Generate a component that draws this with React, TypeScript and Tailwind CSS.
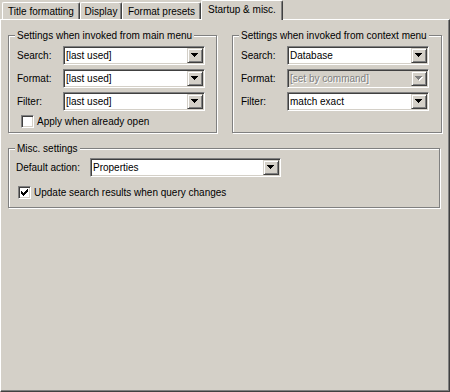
import React from "react";

function Arrow({ disabled = false }: { disabled?: boolean }) {
    const fill = disabled ? "#808080" : "#000000";
    return (
        <svg width="8" height="5" viewBox="0 0 8 5" shapeRendering="crispEdges">
            {disabled && (
                <g fill="#ffffff">
                    <rect x="1" y="1" width="7" height="1" />
                    <rect x="2" y="2" width="5" height="1" />
                    <rect x="3" y="3" width="3" height="1" />
                    <rect x="4" y="4" width="1" height="1" />
                </g>
            )}
            <g fill={fill}>
                <rect x="0" y="0" width="7" height="1" />
                <rect x="1" y="1" width="5" height="1" />
                <rect x="2" y="2" width="3" height="1" />
                <rect x="3" y="3" width="1" height="1" />
            </g>
        </svg>
    );
}

function Combo({ value, className, disabled = false }: { value: string; className: string; disabled?: boolean }) {
    return (
        <div
            className={`h-[19px] flex border border-t-[#808080] border-l-[#808080] border-r-white border-b-white shadow-[inset_1px_1px_0_#404040,inset_-1px_-1px_0_#d4d0c8] p-[1px] ${className}`}
        >
            <div
                className={`flex-1 flex items-center pl-[1px] leading-[13px] whitespace-nowrap overflow-hidden ${
                    disabled ? "bg-[#d4d0c8] text-[#808080] [text-shadow:1px_1px_0_#ffffff]" : "bg-white"
                }`}
            >
                {value}
            </div>
            <div className="w-[16px] flex items-center justify-center bg-[#d4d0c8] border border-t-[#d4d0c8] border-l-[#d4d0c8] border-r-[#404040] border-b-[#404040] shadow-[inset_1px_1px_0_#ffffff,inset_-1px_-1px_0_#808080]">
                <Arrow disabled={disabled} />
            </div>
        </div>
    );
}

function CheckBox({ checked = false }: { checked?: boolean }) {
    return (
        <div className="w-[13px] h-[13px] shrink-0 border border-t-[#808080] border-l-[#808080] border-r-white border-b-white shadow-[inset_1px_1px_0_#404040,inset_-1px_-1px_0_#d4d0c8] bg-white flex items-center justify-center">
            {checked && (
                <svg width="7" height="7" viewBox="0 0 7 7" shapeRendering="crispEdges" fill="#000">
                    <rect x="6" y="0" width="1" height="3" />
                    <rect x="5" y="1" width="1" height="3" />
                    <rect x="4" y="2" width="1" height="3" />
                    <rect x="3" y="3" width="1" height="3" />
                    <rect x="2" y="4" width="1" height="3" />
                    <rect x="1" y="3" width="1" height="3" />
                    <rect x="0" y="2" width="1" height="3" />
                </svg>
            )}
        </div>
    );
}

function Group({ title, className, children }: { title: string; className: string; children: React.ReactNode }) {
    return (
        <fieldset
            className={`border border-[#808080] shadow-[inset_1px_1px_0_#ffffff,1px_1px_0_#ffffff] pl-[6px] ${className}`}
        >
            <legend className="px-[2px] leading-[13px] bg-[#d4d0c8]">{title}</legend>
            {children}
        </fieldset>
    );
}

const tabs = [
    { label: "Title formatting", w: "w-[78px] ml-[2px]" },
    { label: "Display", w: "w-[42px]" },
    { label: "Format presets", w: "w-[79px]" },
];

export default function App() {
    return (
        <div className="w-[450px] h-[392px] bg-[#d4d0c8] text-black text-[10px] font-['Tahoma','Liberation_Sans',Arial,sans-serif] overflow-hidden select-none">
            {/* tab strip */}
            <div className="flex h-[19px] items-end">
                {tabs.map((t) => (
                    <div
                        key={t.label}
                        className={`${t.w} h-[17px] border-l border-t border-white border-r border-r-[#404040] rounded-t-[2px] shadow-[inset_-1px_0_0_#808080] flex justify-center pt-[2px] leading-[13px] whitespace-nowrap`}
                    >
                        {t.label}
                    </div>
                ))}
                <div className="relative z-10 self-start w-[82px] h-[20px] bg-[#d4d0c8] border-l border-t border-white border-r border-r-[#404040] rounded-t-[2px] shadow-[inset_-1px_0_0_#808080] flex justify-center pt-[2px] leading-[13px] whitespace-nowrap">
                    Startup &amp; misc.
                </div>
            </div>

            {/* tab page */}
            <div className="h-[373px] border border-t-white border-l-white border-r-[#404040] border-b-[#404040] shadow-[inset_-1px_-1px_0_#808080] pl-[7px] pt-[9px]">
                <div className="flex gap-[15px] items-stretch">
                    <Group title="Settings when invoked from main menu" className="w-[209px] pt-[4px] pb-[4px]">
                        <div className="grid grid-cols-[46px_142px] gap-y-[4px] items-center pl-[2px]">
                            <span>Search:</span>
                            <Combo value="[last used]" className="w-[142px]" />
                            <span>Format:</span>
                            <Combo value="[last used]" className="w-[142px]" />
                            <span>Filter:</span>
                            <Combo value="[last used]" className="w-[142px]" />
                        </div>
                        <div className="flex items-center gap-[3px] mt-[4px] pl-[6px] leading-[13px]">
                            <CheckBox />
                            <span>Apply when already open</span>
                        </div>
                    </Group>
                    <Group title="Settings when invoked from context menu" className="w-[210px] pt-[4px] pb-[4px]">
                        <div className="grid grid-cols-[46px_142px] gap-y-[4px] items-center pl-[2px]">
                            <span>Search:</span>
                            <Combo value="Database" className="w-[142px]" />
                            <span className="text-black">Format:</span>
                            <Combo value="[set by command]" className="w-[142px]" disabled />
                            <span>Filter:</span>
                            <Combo value="match exact" className="w-[142px]" />
                        </div>
                    </Group>
                </div>

                <Group title="Misc. settings" className="w-[432px] mt-[9px] pt-[3px] pb-[8px]">
                    <div className="flex items-center pl-[1px]">
                        <span className="w-[74px]">Default action:</span>
                        <Combo value="Properties" className="w-[191px]" />
                    </div>
                    <div className="flex items-center gap-[3px] mt-[9px] pl-[3px] leading-[13px]">
                        <CheckBox checked />
                        <span>Update search results when query changes</span>
                    </div>
                </Group>
            </div>
        </div>
    );
}
